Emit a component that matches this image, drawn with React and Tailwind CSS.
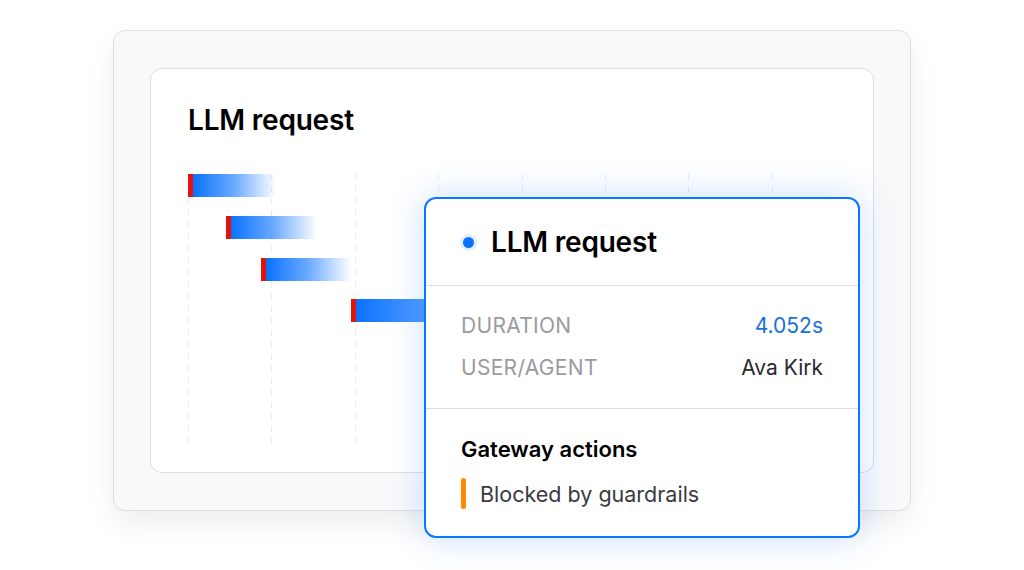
import React from 'react';

const gridLines = [0, 1, 2, 3, 4, 5, 6, 7];

const bars = [
  { ml: 'ml-0', w: 'w-[88px]', mt: 'mt-0' },
  { ml: 'ml-[38px]', w: 'w-[91px]', mt: 'mt-[19px]' },
  { ml: 'ml-[73px]', w: 'w-[90px]', mt: 'mt-[19px]' },
  { ml: 'ml-[163px]', w: 'w-[190px]', mt: 'mt-[18px]' },
];

const App = () => {
  return (
    <div className="relative w-[1024px] h-[570px] bg-white pt-[30px] pl-[113px] font-['Inter','Liberation_Sans',sans-serif]">
      {/* outer frame */}
      <div className="w-[798px] h-[481px] rounded-[12px] border border-[#dedee4] bg-[#f9f9fa] pt-[37px] pl-[36px] shadow-[0_12px_30px_rgba(0,0,0,0.07)]">
        {/* inner card */}
        <div className="w-[724px] h-[405px] rounded-[12px] border border-[#dedee4] bg-white pt-[33px] pl-[37px]">
          <h1 className="text-[28px] leading-[36px] font-semibold text-black tracking-[-0.2px]">LLM request</h1>

          {/* chart */}
          <div className="relative mt-[36px] h-[276px] w-[640px]">
            <div className="absolute inset-0 flex">
              {gridLines.map((i) => (
                <div key={i} className="w-[83.4px] shrink-0 h-full">
                  <div className="w-px h-full bg-[linear-gradient(to_bottom,#ececf0_50%,transparent_50%)] bg-[length:1px_12px]" />
                </div>
              ))}
            </div>
            <div className="relative flex flex-col">
              {bars.map((b, i) => (
                <div key={i} className={`${b.ml} ${b.mt} ${b.w} h-[23px] flex`}>
                  <div className="w-[5px] h-full bg-[#e3120b]" />
                  <div className="flex-1 h-full bg-linear-to-r from-[#0a72ff] via-[#0a72ff]/60 to-[#0a72ff]/0" />
                </div>
              ))}
            </div>
          </div>
        </div>
      </div>

      {/* popup */}
      <div className="absolute left-[424px] top-[197px] w-[436px] h-[341px] rounded-[12px] border-2 border-[#0b76ff] bg-white shadow-[0_0_36px_rgba(10,114,255,0.22)] flex flex-col">
        <div className="h-[87px] flex items-center pl-[37px] border-b border-[#dcdce2]">
          <span className="w-[11px] h-[11px] rounded-full bg-[#0b72ff] ring-[3px] ring-[#e4eeff]" />
          <span className="ml-[17px] text-[28px] font-semibold text-black tracking-[-0.2px]">LLM request</span>
        </div>
        <div className="h-[123px] flex flex-col justify-center gap-[17px] px-[35px] pb-[2px] border-b border-[#dcdce2]">
          <div className="flex justify-between items-center text-[21px] leading-[25px]">
            <span className="text-[#9a9aa0] tracking-[0.3px]">DURATION</span>
            <span className="text-[#1a6fd8]">4.052s</span>
          </div>
          <div className="flex justify-between items-center text-[21px] leading-[25px]">
            <span className="text-[#9a9aa0] tracking-[0.3px]">USER/AGENT</span>
            <span className="text-[#2a2a2e]">Ava Kirk</span>
          </div>
        </div>
        <div className="flex-1 px-[35px] pt-[26px]">
          <div className="text-[22px] leading-[28px] font-semibold text-black">Gateway actions</div>
          <div className="mt-[15px] flex items-center">
            <span className="w-[5px] h-[31px] rounded-full bg-[#ff8a00]" />
            <span className="ml-[14px] text-[21.5px] leading-[28px] text-[#3a3a3e]">Blocked by guardrails</span>
          </div>
        </div>
      </div>
    </div>
  );
};

export default App;
